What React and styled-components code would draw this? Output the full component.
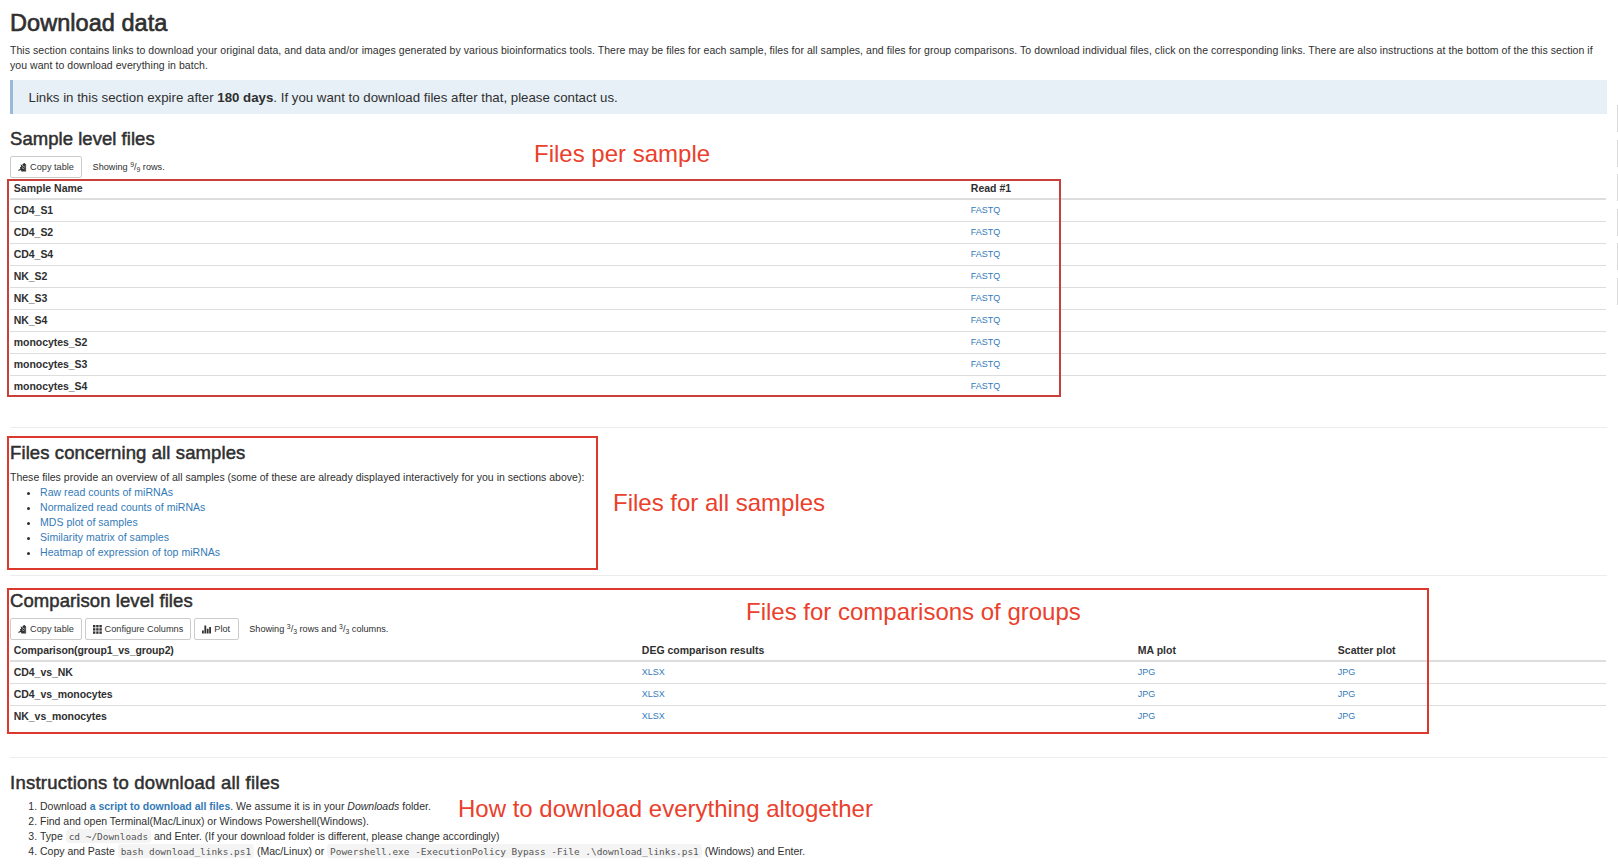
import React from "react";
import styled, { createGlobalStyle } from "styled-components";

const Global = createGlobalStyle`
  *, *::before, *::after { box-sizing: border-box; }
  html, body { margin: 0; background: #fff; }
  body {
    font-family: "Liberation Sans", Arial, sans-serif;
    font-size: 10.5px;
    line-height: 15px;
    color: #2f2f2f;
    overflow: hidden;
  }
`;

const Page = styled.main`
  position: relative;
  width: 1618px;
  height: 866px;
  overflow: hidden;
  padding: 11px 11px 0 10px;
`;

const Title = styled.h1`
  margin: 0 0 8px;
  height: 24px;
  font-size: 23.5px;
  line-height: 24px;
  font-weight: 400;
  -webkit-text-stroke: 0.65px currentColor;
  letter-spacing: 0.05px;
`;

const Heading = styled.h2`
  margin: 0;
  font-size: 18.5px;
  line-height: 20px;
  height: 20px;
  font-weight: 400;
  -webkit-text-stroke: 0.5px currentColor;
  letter-spacing: ${(p) => p.$track || 0}px;
`;

const Text = styled.p`
  margin: ${(p) => p.$top || 0}px 0 0;
  white-space: nowrap;
  letter-spacing: ${(p) => p.$track || 0}px;
`;

const Notice = styled.div`
  margin-top: 7px;
  height: 34px;
  padding-left: 15.5px;
  border-left: 3px solid #98b9d7;
  background: #e7eff7;
  font-size: 13.28px;
  line-height: 35px;
  white-space: nowrap;
`;

const Section = styled.section`
  padding-top: ${(p) => p.$top}px;
  height: ${(p) => p.$height}px;
  border-top: ${(p) => (p.$ruled ? "1px solid #ececec" : "0")};
`;

const Toolbar = styled.div`
  display: flex;
  align-items: center;
  gap: 3.2px;
  height: 22px;
  margin-top: 7px;
`;

const Button = styled.button`
  display: flex;
  flex: none;
  align-items: center;
  justify-content: center;
  gap: 3px;
  width: ${(p) => p.$width}px;
  height: 22px;
  padding: 0;
  border: 1px solid #ccc;
  border-radius: 2px;
  background: #fff;
  color: #333;
  font: 9.2px/14px "Liberation Sans", Arial, sans-serif;
  white-space: nowrap;
  svg { flex: none; }
`;

const Count = styled.span`
  margin-left: 7.4px;
  font-size: 9.15px;
  line-height: 14px;
  white-space: nowrap;
  sup, sub { font-size: 75%; line-height: 0; position: relative; vertical-align: baseline; }
  sup { top: -0.5em; }
  sub { bottom: -0.25em; }
`;

const Table = styled.table`
  width: 1596px;
  border-collapse: separate;
  border-spacing: 0;
  table-layout: fixed;
`;

const HeadCell = styled.th`
  height: 22px;
  padding: 1px 0 0 3.8px;
  border-bottom: 2px solid #ddd;
  text-align: left;
  font-size: 10.5px;
  line-height: 13px;
  white-space: nowrap;
  letter-spacing: ${(p) => (p.$tight ? -0.1 : 0)}px;
`;

const NameCell = styled.th`
  height: 22px;
  padding: 0 0 1px 3.8px;
  border-bottom: 1px solid ${(p) => (p.$last ? "transparent" : "#ddd")};
  text-align: left;
  font-size: 10.5px;
  line-height: 12px;
  letter-spacing: -0.06px;
`;

const Cell = styled.td`
  height: 22px;
  padding: 0 0 2px 3.8px;
  border-bottom: 1px solid ${(p) => (p.$last ? "transparent" : "#ddd")};
  font-size: 9px;
  line-height: 12px;
`;

const Link = styled.a`
  color: #337ab7;
  font-weight: ${(p) => (p.$strong ? 700 : 400)};
`;

const Bullets = styled.ul`
  margin: 0;
  padding-left: 30px;
  letter-spacing: 0.045px;
`;

const Steps = styled.ol`
  margin: 6px 0 0;
  padding-left: 30px;
  li { height: 15px; white-space: nowrap; }
`;

const Code = styled.code`
  display: inline-block;
  height: 14px;
  padding: 0 3px;
  border-radius: 3px;
  background: #f4f4f4;
  color: #555;
  font: 9.43px/16px "DejaVu Sans Mono", monospace;
  vertical-align: top;
`;

const Outline = styled.div`
  position: absolute;
  left: 7px;
  top: ${(p) => p.$top}px;
  width: ${(p) => p.$width}px;
  height: ${(p) => p.$height}px;
  border: 2px solid ${(p) => p.$color || "#dc382d"};
`;

const Callout = styled.div`
  position: absolute;
  left: ${(p) => p.$left}px;
  top: ${(p) => p.$top}px;
  color: #ea402c;
  font-size: 24px;
  line-height: 28px;
  white-space: nowrap;
`;

const EdgeTabs = styled.div`
  position: absolute;
  right: 0;
  top: 105px;
  display: grid;
  gap: 7.5px;
`;

const EdgeTab = styled.i`
  width: 1px;
  height: 27px;
  background: #d8d8d8;
`;

const CopyIcon = () => (
  <svg width="9" height="9" viewBox="0 0 9 9" fill="#333">
    <path d="M2.6 1.3 4.4 2.5V1.2L5.2.9 5.7.1h1l.5.8.9.3v7.2H3.4L3 7.1.4 7.9V6.7l1.9-.8L2 4.1h1.1Z" />
    <path d="m4.2 2.5 2.5 1.7M3.9 4.5l2 1.3" stroke="#fff" strokeWidth=".6" />
    <path d="M7.2 1.8v6" stroke="#999" strokeWidth=".5" />
  </svg>
);

const GridIcon = () => (
  <svg width="9" height="9" viewBox="0 0 9 9" fill="#333">
    {[0, 3.2, 6.4].map((y) => [0, 3.2, 6.4].map((x) => <rect key={x + "-" + y} x={x} y={y} width="2.4" height="2.4" />))}
  </svg>
);

const PlotIcon = () => (
  <svg width="9" height="9" viewBox="0 0 9 9" fill="#333">
    <path d="M0 8.4V5.6h1.8v2.8ZM2.4 8.4V.6h1.8v7.8ZM4.8 8.4V3.8h1.8v4.6ZM7.2 8.4V2h1.8v6.4Z" />
  </svg>
);

const samples = ["CD4_S1", "CD4_S2", "CD4_S4", "NK_S2", "NK_S3", "NK_S4", "monocytes_S2", "monocytes_S3", "monocytes_S4"];
const comparisons = ["CD4_vs_NK", "CD4_vs_monocytes", "NK_vs_monocytes"];
const overview = [
  "Raw read counts of miRNAs",
  "Normalized read counts of miRNAs",
  "MDS plot of samples",
  "Similarity matrix of samples",
  "Heatmap of expression of top miRNAs",
];

function DataTable({ columns, widths, rows, links }) {
  return (
    <Table>
      <colgroup>
        {widths.map((w, i) => <col key={i} width={w} />)}
      </colgroup>
      <thead>
        <tr>{columns.map((c) => <HeadCell key={c} $tight={c.includes("_")}>{c}</HeadCell>)}</tr>
      </thead>
      <tbody>
        {rows.map((name, i) => {
          const last = i === rows.length - 1;
          return (
            <tr key={name}>
              <NameCell $last={last}>{name}</NameCell>
              {links.map((l, j) => <Cell key={j} $last={last}><Link>{l}</Link></Cell>)}
            </tr>
          );
        })}
      </tbody>
    </Table>
  );
}

export default function App() {
  return (
    <Page>
      <Global />
      <Title>Download data</Title>
      <Text $track={0.057}>
        This section contains links to download your original data, and data and/or images generated by various bioinformatics tools. There may be files for each sample, files for all samples, and files for group comparisons. To download individual files, click on the corresponding links. There are also instructions at the bottom of the this section if
        <br />
        you want to download everything in batch.
      </Text>
      <Notice>
        Links in this section expire after <b>180 days</b>. If you want to download files after that, please contact us.
      </Notice>

      <Section $top={15} $height={313}>
        <Heading $track={0.04}>Sample level files</Heading>
        <Toolbar>
          <Button $width={72}><CopyIcon />Copy table</Button>
          <Count>Showing <sup>9</sup>/<sub>9</sub> rows.</Count>
        </Toolbar>
        <DataTable columns={["Sample Name", "Read #1"]} widths={[957, 639]} rows={samples} links={["FASTQ"]} />
      </Section>

      <Section $ruled $top={15} $height={148}>
        <Heading $track={0.11}>Files concerning all samples</Heading>
        <Text $top={7} $track={0.01}>These files provide an overview of all samples (some of these are already displayed interactively for you in sections above):</Text>
        <Bullets>
          {overview.map((o) => <li key={o}><Link>{o}</Link></li>)}
        </Bullets>
      </Section>

      <Section $ruled $top={15} $height={182}>
        <Heading $track={0.08}>Comparison level files</Heading>
        <Toolbar>
          <Button $width={72}><CopyIcon />Copy table</Button>
          <Button $width={105.5}><GridIcon />Configure Columns</Button>
          <Button $width={44.8}><PlotIcon />Plot</Button>
          <Count>Showing <sup>3</sup>/<sub>3</sub> rows and <sup>3</sup>/<sub>3</sub> columns.</Count>
        </Toolbar>
        <DataTable
          columns={["Comparison(group1_vs_group2)", "DEG comparison results", "MA plot", "Scatter plot"]}
          widths={[628, 496, 200, 272]}
          rows={comparisons}
          links={["XLSX", "JPG", "JPG"]}
        />
      </Section>

      <Section $ruled $top={15} $height={109}>
        <Heading $track={0.25}>Instructions to download all files</Heading>
        <Steps>
          <li>Download <Link $strong>a script to download all files</Link>. We assume it is in your <i>Downloads</i> folder.</li>
          <li>Find and open Terminal(Mac/Linux) or Windows Powershell(Windows).</li>
          <li>Type <Code>cd ~/Downloads</Code> and Enter. (If your download folder is different, please change accordingly)</li>
          <li>Copy and Paste <Code>bash download_links.ps1</Code> (Mac/Linux) or <Code>Powershell.exe -ExecutionPolicy Bypass -File .\download_links.ps1</Code> (Windows) and Enter.</li>
        </Steps>
      </Section>

      <Outline $top={179} $width={1054} $height={218} $color="#c8403a" />
      <Outline $top={436} $width={591} $height={134} />
      <Outline $top={588} $width={1422} $height={146} />
      <Callout $left={534} $top={140}>Files per sample</Callout>
      <Callout $left={613} $top={489}>Files for all samples</Callout>
      <Callout $left={746} $top={598}>Files for comparisons of groups</Callout>
      <Callout $left={458} $top={795}>How to download everything altogether</Callout>
      <EdgeTabs>{[0, 1, 2, 3, 4, 5].map((n) => <EdgeTab key={n} />)}</EdgeTabs>
    </Page>
  );
}
